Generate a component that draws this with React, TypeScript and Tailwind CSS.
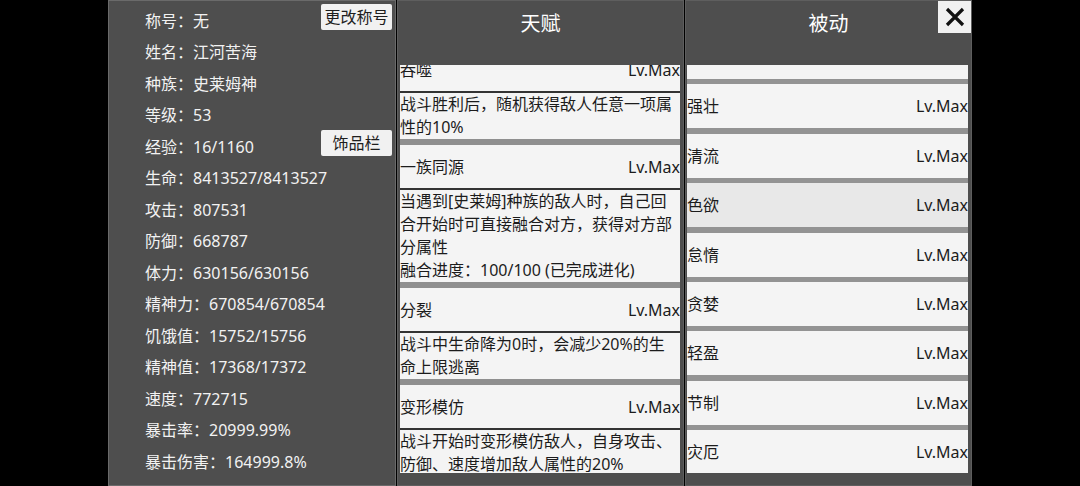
import React from "react";

const stats = [
  { label: "称号", value: "无", button: "更改称号" },
  { label: "姓名", value: "江河苦海" },
  { label: "种族", value: "史莱姆神" },
  { label: "等级", value: "53" },
  { label: "经验", value: "16/1160", button: "饰品栏" },
  { label: "生命", value: "8413527/8413527" },
  { label: "攻击", value: "807531" },
  { label: "防御", value: "668787" },
  { label: "体力", value: "630156/630156" },
  { label: "精神力", value: "670854/670854" },
  { label: "饥饿值", value: "15752/15756" },
  { label: "精神值", value: "17368/17372" },
  { label: "速度", value: "772715" },
  { label: "暴击率", value: "20999.99%" },
  { label: "暴击伤害", value: "164999.8%" },
];

const talents = [
  { name: "吞噬", lines: ["战斗胜利后，随机获得敌人任意一项属", "性的10%"] },
  {
    name: "一族同源",
    lines: [
      "当遇到[史莱姆]种族的敌人时，自己回",
      "合开始时可直接融合对方，获得对方部",
      "分属性",
      "融合进度：100/100 (已完成进化)",
    ],
  },
  { name: "分裂", lines: ["战斗中生命降为0时，会减少20%的生", "命上限逃离"] },
  { name: "变形模仿", lines: ["战斗开始时变形模仿敌人，自身攻击、", "防御、速度增加敌人属性的20%"] },
];

const passives = ["", "强壮", "清流", "色欲", "怠惰", "贪婪", "轻盈", "节制", "灾厄"];

export default function App() {
  return (
    <div
      className="w-[1080px] h-[486px] bg-black flex gap-[1px] pl-[108px] overflow-hidden"
      style={{ fontFamily: '"Noto Sans", "Noto Sans CJK SC", sans-serif' }}
    >
      {/* left: character stats */}
      <div className="w-[288px] h-[486px] bg-[#4e4e4e] border border-[#6a6a6a] pl-[36px] pr-[3px] pt-[3px] text-[16px] text-[#f2f2f2]">
        {stats.map((s) => (
          <div key={s.label} className="flex justify-between items-start h-[31.5px]">
            <span className="leading-[31.5px] whitespace-nowrap pt-[1.5px]">
              {s.label}：{s.value}
            </span>
            {s.button && (
              <button className="w-[71px] h-[26px] bg-[#f1f1f1] text-[#1e1e1e] text-[16px] leading-[26px] rounded-[2px] text-center">
                {s.button}
              </button>
            )}
          </div>
        ))}
      </div>

      {/* middle: talents */}
      <div className="w-[287px] h-[486px] bg-[#4e4e4e] border border-[#5e5e5e] flex flex-col">
        <div className="h-[64px] shrink-0 text-center text-white text-[20px] leading-[28px] pt-[9px]">天赋</div>
        <div className="ml-[2px] mr-[3px] h-[408px] overflow-hidden">
          <div className="flex flex-col gap-[6px] bg-[#8f8f8f] -mt-[17px]">
            {talents.map((t) => (
              <div key={t.name} className="bg-[#f4f4f4] text-[#1c1c1c] text-[16px]">
                <div className="h-[43px] flex items-center justify-between">
                  <span>{t.name}</span>
                  <span>Lv.Max</span>
                </div>
                <div className="h-[2px] bg-[#333]" />
                <div className="leading-[23px] whitespace-nowrap">
                  {t.lines.map((l) => (
                    <div key={l}>{l}</div>
                  ))}
                </div>
              </div>
            ))}
          </div>
        </div>
      </div>

      {/* right: passives */}
      <div className="relative w-[287px] h-[486px] bg-[#4e4e4e] border border-[#5e5e5e] flex flex-col">
        <div className="h-[64px] shrink-0 text-center text-white text-[20px] leading-[28px] pt-[9px]">被动</div>
        <button className="absolute top-[0px] right-[0px] w-[33px] h-[32px] bg-[#f1f1f1] flex items-center justify-center">
          <svg width="20" height="20" viewBox="0 0 20 20">
            <path d="M2 2 L18 18 M18 2 L2 18" stroke="#111" strokeWidth="3.2" />
          </svg>
        </button>
        <div className="ml-[1px] mr-[3px] h-[408px] overflow-hidden">
          <div className="flex flex-col gap-[5.4px] bg-[#939393] -mt-[30px]">
            {passives.map((p, i) => (
              <div
                key={i}
                className={`h-[44px] flex items-center justify-between text-[16px] text-[#1c1c1c] ${
                  p === "色欲" ? "bg-[#e8e8e8]" : "bg-[#f4f4f4]"
                }`}
              >
                <span>{p}</span>
                <span>{p ? "Lv.Max" : ""}</span>
              </div>
            ))}
          </div>
        </div>
      </div>
    </div>
  );
}
